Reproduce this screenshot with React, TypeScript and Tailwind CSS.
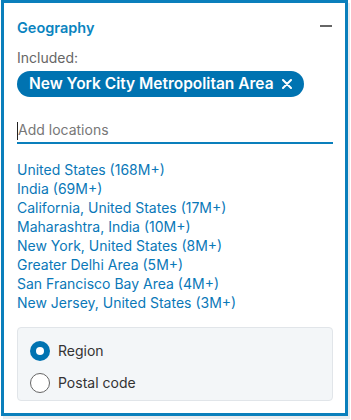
const locations = [
  "United States (168M+)",
  "India (69M+)",
  "California, United States (17M+)",
  "Maharashtra, India (10M+)",
  "New York, United States (8M+)",
  "Greater Delhi Area (5M+)",
  "San Francisco Bay Area (4M+)",
  "New Jersey, United States (3M+)",
];

const CloseIcon = () => (
  <svg width="10" height="10" viewBox="0 0 10 10" className="shrink-0">
    <path d="M1 1L9 9M9 1L1 9" stroke="white" strokeWidth="2" strokeLinecap="round" />
  </svg>
);

export default function App() {
  return (
    <div className="w-[351px] h-[420px] bg-white font-['Inter',sans-serif]">
      <div className="ml-[1px] w-[347px] h-[416px] border-[3px] border-[#0a7fbc] bg-white pl-[13px] pr-[12px] pt-[15px] shadow-[2px_3px_0_#e9ecef] flex flex-col">
        <div className="flex items-center justify-between h-[20px]">
          <span className="text-[14.5px] leading-[20px] font-semibold text-[#0a84c0]">Geography</span>
          <span className="w-[12px] h-[2px] bg-[#666] mr-[1px] -mt-[4px]" />
        </div>

        <div className="mt-[10px] text-[14px] leading-[20px] text-[#666]">Included:</div>

        <div className="mt-[3px] self-start flex items-center gap-[8px] h-[26px] rounded-full bg-[#0073b1] pl-[12px] pr-[12px]">
          <span className="text-[15.5px] leading-[26px] font-semibold text-white">New York City Metropolitan Area</span>
          <CloseIcon />
        </div>

        <div className="mt-[21px] h-[26px] border-b-2 border-[#0a7fbc] flex">
          <span className="w-[1px] h-[18px] mt-[4px] bg-[#222]" />
          <span className="text-[14px] leading-[24px] text-[#777]">Add locations</span>
        </div>

        <ul className="mt-[16px] flex flex-col">
          {locations.map((loc) => (
            <li key={loc} className="text-[14px] leading-[19px] text-[#0a78b8]">
              {loc}
            </li>
          ))}
        </ul>

        <div className="mt-[15px] border border-[#e1e5e9] rounded-[4px] bg-[#f3f6f8] pl-[12px] pt-[13px] pb-[7px] flex flex-col gap-[12px]">
          <label className="flex items-center gap-[8px] h-[20px]">
            <span className="w-[20px] h-[20px] rounded-full bg-[#0073b1] flex items-center justify-center">
              <span className="w-[8px] h-[8px] rounded-full bg-white" />
            </span>
            <span className="text-[14px] leading-[20px] text-[#333]">Region</span>
          </label>
          <label className="flex items-center gap-[8px] h-[20px]">
            <span className="w-[20px] h-[20px] rounded-full border border-[#666] bg-white" />
            <span className="text-[14px] leading-[20px] text-[#333]">Postal code</span>
          </label>
        </div>
      </div>
    </div>
  );
}
